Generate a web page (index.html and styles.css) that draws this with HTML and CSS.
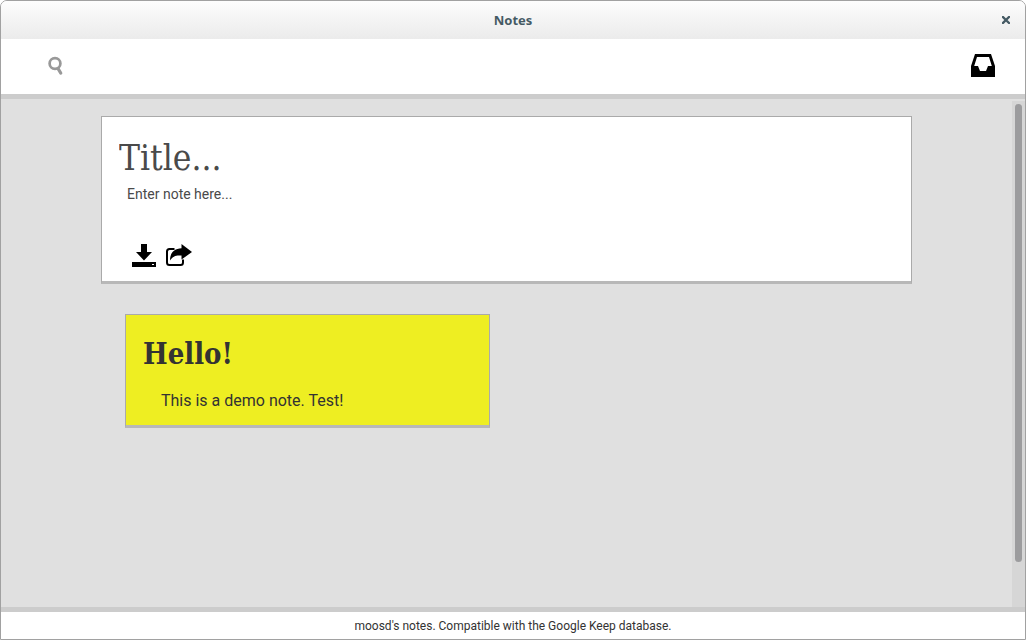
FILE: index.html
```
<!DOCTYPE html>
<html lang="en">
<head>
<meta charset="utf-8">
<title>Notes</title>
<link rel="stylesheet" href="styles.css">
</head>
<body>
<div class="window">
  <header class="titlebar">
    <h1 class="titlebar-title">Notes</h1>
    <button class="icon-button close" type="button" aria-label="Close">
      <svg width="8" height="8" viewBox="0 0 8 8"><path d="M1 1L7 7M7 1L1 7" fill="none" stroke="#455a64" stroke-width="2.3" stroke-linecap="square"/></svg>
    </button>
  </header>
  <nav class="toolbar">
    <button class="icon-button" type="button" aria-label="Search">
      <svg width="16" height="20" viewBox="0 0 16 20"><circle cx="8" cy="7.500" r="5.400" fill="none" stroke="#999" stroke-width="2.700"/><path d="M11 12.500L13.700 17" stroke="#999" stroke-width="3.300" stroke-linecap="round"/></svg>
    </button>
    <button class="icon-button" type="button" aria-label="Archive">
      <svg width="24" height="23" viewBox="0 0 24 23"><path fill-rule="evenodd" d="M4 0H20L24 12V23H0V12ZM6 3L3.2 12H7L9 17H15L17 12H20.8L18 3Z"/></svg>
    </button>
  </nav>
  <main class="content">
    <div class="notes">
      <form class="card composer">
        <input class="composer-title" type="text" placeholder="Title..." aria-label="Title">
        <textarea class="composer-text" rows="2" placeholder="Enter note here..." aria-label="Note"></textarea>
        <div class="actions">
          <button class="icon-button" type="button" aria-label="Save">
            <svg width="24" height="24" viewBox="0 0 24 24"><path fill-rule="evenodd" d="M9 0H15V8H20L12 16.5L4 8H9ZM0 18H24V23H0ZM20 20V21H22V20Z"/></svg>
          </button>
          <button class="icon-button" type="button" aria-label="Share">
            <svg width="26" height="24" viewBox="0 0 26 24"><path d="M8.5 5H3.5Q1 5 1 7.500V18.500Q1 21 3.500 21H14.500Q17 21 17 18.500V15.500" fill="none" stroke="#000" stroke-width="2"/><path d="M15.500 0L26 8L15.500 15.500V11.500C10 11 7 12 4 16.500C4 9 8 4.500 15.500 4.200Z"/></svg>
          </button>
        </div>
      </form>
      <article class="card note">
        <h2 class="note-title">Hello!</h2>
        <p class="note-text">This is a demo note. Test!</p>
      </article>
    </div>
    <div class="scrollbar"><div class="thumb"></div></div>
  </main>
  <footer class="footer">moosd's notes. Compatible with the Google Keep database.</footer>
</div>
</body>
</html>
```
FILE: styles.css
```
* { box-sizing: border-box; }

body {
  margin: 0;
  background: #fff;
  color: #333;
  font-family: Roboto, sans-serif;
}

.window {
  display: flex;
  flex-direction: column;
  min-height: 100vh;
  border: 1px solid #a1a1a1;
  border-radius: 7px 7px 0 0;
  overflow: hidden;
}

.icon-button {
  display: block;
  padding: 0;
  border: 0;
  background: none;
  cursor: pointer;
}

.icon-button svg { display: block; }

.titlebar {
  display: grid;
  grid-template-columns: 1fr auto 1fr;
  align-items: center;
  height: 38px;
  padding: 0 15px;
  background: linear-gradient(#fdfdfd, #ebebeb);
}

.titlebar-title {
  grid-column: 2;
  margin: 0;
  color: #455a64;
  font: bold 13px/20px "Noto Sans", sans-serif;
}

.close { justify-self: end; }

.toolbar {
  display: flex;
  align-items: center;
  justify-content: space-between;
  height: 60px;
  padding: 0 30px 2px 46px;
  border-bottom: 5px solid #ccc;
  background: #fff;
}

.content {
  display: flex;
  flex: 1;
  background: #e0e0e0;
}

.notes {
  flex: 1;
  padding: 17px 100px;
}

.card {
  border: 1px solid #aaa;
  border-bottom: 3px solid #b8b8b8;
}

.composer {
  padding: 16px 17px 13px;
  background: #fff;
}

.composer-title,
.composer-text {
  display: block;
  width: 100%;
  border: 0;
  outline: 0;
  background: none;
  color: #444;
  resize: none;
}

.composer-title {
  height: 49px;
  padding: 0;
  font: 35px/48px "Roboto Slab", "DejaVu Serif Condensed", "DejaVu Serif", serif;
}

.composer-text {
  padding: 2px 8px;
  font: 14px/20px Roboto, sans-serif;
}

.composer-title::placeholder,
.composer-text::placeholder {
  color: #4a4a4a;
  opacity: 1;
}

.actions {
  display: flex;
  gap: 10px;
  padding: 18px 13px 0;
}

.note {
  width: 45%;
  margin: 30px 24px;
  padding: 17px;
  padding-bottom: 14px;
  background: #eeee22;
}

.note-title {
  margin: 0;
  font: bold 29px/44px "Roboto Slab", "DejaVu Serif Condensed", "DejaVu Serif", serif;
}

.note-text {
  margin: 15px 18px 0;
  font-size: 16px;
  line-height: 20px;
}

.scrollbar {
  display: flex;
  width: 13px;
  margin-top: 2px;
  padding: 3px;
  background: #d6d6d6;
}

.thumb {
  width: 7px;
  height: 458px;
  border-radius: 4px;
  background: #9c9c9e;
}

.footer {
  padding-top: 1px;
  border-top: 5px solid #ccc;
  background: #fff;
  font-size: 12px;
  line-height: 26px;
  text-align: center;
}
```
